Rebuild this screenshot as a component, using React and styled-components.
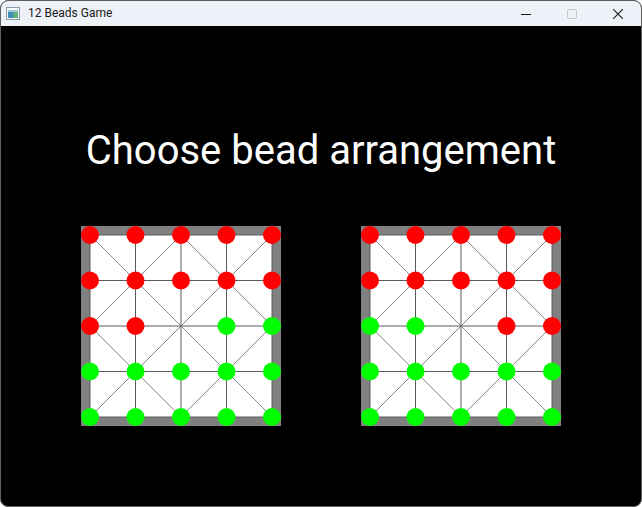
import React from "react";
import styled, { createGlobalStyle } from "styled-components";

const GlobalStyle = createGlobalStyle`
  html, body {
    margin: 0;
    padding: 0;
    background: #ffffff;
  }
`;

const SPACING = 45.5;
const SIZE = SPACING * 4;

const RED = "#ff0000";
const GREEN = "#00ff00";

// r = red, g = green, . = empty
const layouts = [
  ["rrrrr", "rrrrr", "rr.gg", "ggggg", "ggggg"],
  ["rrrrr", "rrrrr", "gg.rr", "ggggg", "ggggg"],
];

// alquerque style diagonals, in grid units
const diagonals = [
  [0, 0, 4, 4],
  [4, 0, 0, 4],
  [2, 0, 0, 2],
  [2, 0, 4, 2],
  [0, 2, 2, 4],
  [4, 2, 2, 4],
];

const Window = styled.div`
  width: 642px;
  height: 507px;
  box-sizing: border-box;
  border: 1px solid #5f5f5f;
  border-radius: 8px;
  overflow: hidden;
  display: flex;
  flex-direction: column;
  background: #000000;
`;

const TitleBar = styled.div`
  height: 25px;
  flex: none;
  display: flex;
  align-items: center;
  background: #eff1f8;
  font-family: Roboto, "Liberation Sans", sans-serif;
  font-size: 12px;
  color: #1a1a1a;
`;

const AppIcon = styled.svg`
  width: 14px;
  height: 13px;
  margin-left: 5px;
  margin-right: 8px;
`;

const TitleText = styled.span`
  flex: 1;
  line-height: 25px;
`;

const CaptionButton = styled.div`
  width: 46px;
  height: 25px;
  display: flex;
  align-items: center;
  justify-content: center;
  color: ${(p) => (p.disabled ? "#c4c4c8" : "#1a1a1a")};
`;

const Content = styled.div`
  flex: 1;
  display: flex;
  flex-direction: column;
  align-items: center;
`;

const Heading = styled.h1`
  margin: 101px 0 0;
  font-family: Roboto, "Liberation Sans", sans-serif;
  font-weight: 400;
  font-size: 40px;
  line-height: 48px;
  color: #ffffff;
`;

const Boards = styled.div`
  margin-top: 51px;
  display: flex;
  gap: 80px;
`;

const Frame = styled.div`
  width: 200px;
  height: 200px;
  box-sizing: border-box;
  padding: 9px;
  background: #808080;
`;

const BoardSvg = styled.svg`
  display: block;
  overflow: visible;
`;

const Board = ({ rows }) => {
  const p = (i) => i * SPACING;
  return (
    <Frame>
      <BoardSvg width={SIZE} height={SIZE}>
        <rect x="0" y="0" width={SIZE} height={SIZE} fill="#ffffff" />
        {[0, 1, 2, 3, 4].map((i) => (
          <g key={i} stroke="#5a5a5a" strokeWidth="1">
            <line x1={p(i)} y1="0" x2={p(i)} y2={SIZE} />
            <line x1="0" y1={p(i)} x2={SIZE} y2={p(i)} />
          </g>
        ))}
        {diagonals.map(([x1, y1, x2, y2], i) => (
          <line
            key={i}
            x1={p(x1)}
            y1={p(y1)}
            x2={p(x2)}
            y2={p(y2)}
            stroke="#6a6a6a"
            strokeWidth="0.8"
          />
        ))}
        {rows.map((row, r) =>
          row.split("").map((c, col) =>
            c === "." ? null : (
              <circle
                key={`${r}-${col}`}
                cx={p(col)}
                cy={p(r)}
                r="9"
                fill={c === "r" ? RED : GREEN}
              />
            )
          )
        )}
      </BoardSvg>
    </Frame>
  );
};

export default function App() {
  return (
    <>
      <GlobalStyle />
      <Window>
        <TitleBar>
          <AppIcon viewBox="0 0 14 13">
            <rect x="0.5" y="0.5" width="13" height="12" fill="#f4f6f8" stroke="#8a9aa8" />
            <rect x="2" y="3" width="5" height="8" fill="#3d8fb8" />
            <rect x="7" y="3" width="5" height="8" fill="#5fb07a" />
            <rect x="2" y="3" width="10" height="2" fill="#9ec9d8" />
          </AppIcon>
          <TitleText>12 Beads Game</TitleText>
          <CaptionButton>
            <svg width="10" height="10" viewBox="0 0 10 10">
              <line x1="0" y1="5.5" x2="10" y2="5.5" stroke="currentColor" strokeWidth="1" />
            </svg>
          </CaptionButton>
          <CaptionButton disabled>
            <svg width="10" height="10" viewBox="0 0 10 10">
              <rect x="0.5" y="0.5" width="9" height="9" rx="1" fill="none" stroke="currentColor" />
            </svg>
          </CaptionButton>
          <CaptionButton>
            <svg width="10" height="10" viewBox="0 0 10 10">
              <path d="M0 0 L10 10 M10 0 L0 10" stroke="currentColor" strokeWidth="1.1" />
            </svg>
          </CaptionButton>
        </TitleBar>
        <Content>
          <Heading>Choose bead arrangement</Heading>
          <Boards>
            {layouts.map((rows, i) => (
              <Board key={i} rows={rows} />
            ))}
          </Boards>
        </Content>
      </Window>
    </>
  );
}
